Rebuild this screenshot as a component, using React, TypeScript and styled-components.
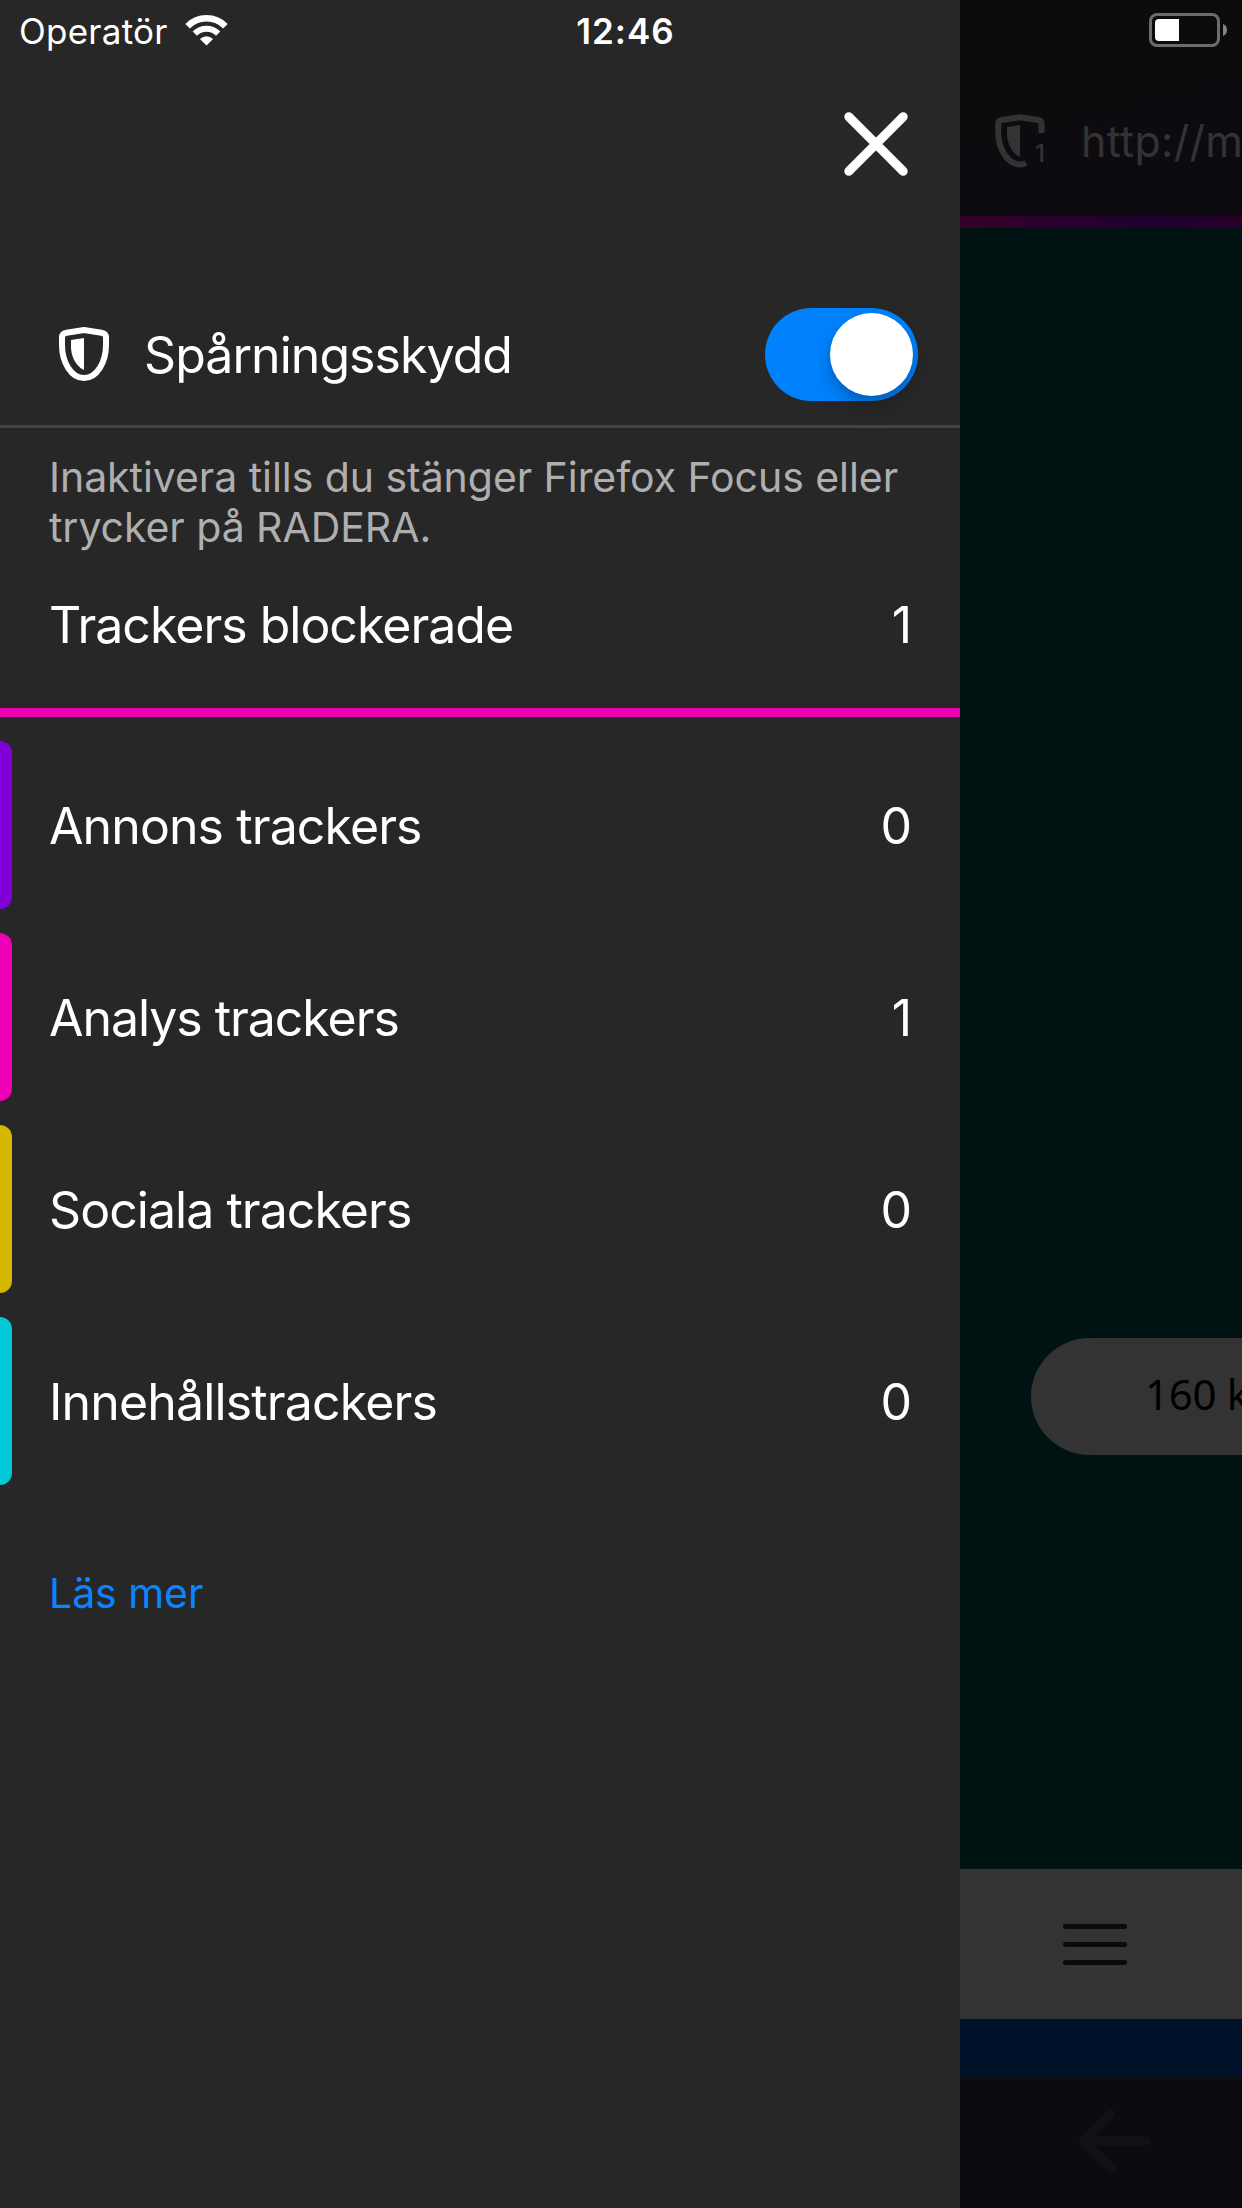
import React from "react";
import styled, { createGlobalStyle } from "styled-components";

const GlobalStyle = createGlobalStyle`
  *, *::before, *::after { box-sizing: border-box; }
  body {
    margin: 0;
    background: #272727;
    font-family: Inter, "Liberation Sans", sans-serif;
    -webkit-font-smoothing: antialiased;
  }
`;

const Screen = styled.div`
  position: relative;
  display: flex;
  width: 1242px;
  height: 2208px;
  overflow: hidden;
  white-space: nowrap;
`;

const StatusBar = styled.header`
  position: absolute;
  inset: 0 0 auto 0;
  display: grid;
  grid-template-columns: 1fr auto 1fr;
  align-items: center;
  height: 60px;
  padding: 0 15px 0 19px;
  color: #fff;
`;

const Carrier = styled.div`
  display: flex;
  align-items: center;
  gap: 17px;
  font-size: 35px;
  letter-spacing: 0.25px;
`;

const CarrierName = styled.span`
  padding-top: 2px;
`;

const Clock = styled.time`
  padding: 2px 0 0 5px;
  font-size: 35px;
  font-weight: 600;
  letter-spacing: 1px;
`;

const BatteryIcon = styled.svg`
  justify-self: end;
`;

const Drawer = styled.aside`
  display: flex;
  flex-direction: column;
  flex: 0 0 960px;
  background: #272727;
  color: #fff;
`;

const DrawerTop = styled.div`
  display: flex;
  justify-content: flex-end;
  height: 283px;
  padding: 112px 52px 0 0;
`;

const CloseButton = styled.button`
  display: block;
  width: 64px;
  height: 64px;
  padding: 0;
  border: 0;
  background: none;
`;

const ProtectionRow = styled.div`
  display: flex;
  align-items: center;
  height: 145px;
  padding: 0 42px 0 59px;
  border-bottom: 3px solid #434347;
`;

const ProtectionLabel = styled.span`
  flex: 1;
  margin-left: 35px;
  padding-top: 2px;
  font-size: 50px;
  letter-spacing: -0.95px;
`;

const Switch = styled.span`
  display: flex;
  justify-content: flex-end;
  align-items: center;
  width: 153px;
  height: 93px;
  padding-right: 5px;
  border-radius: 47px;
  background: #0082ff;
`;

const Knob = styled.span`
  width: 83px;
  height: 83px;
  border-radius: 50%;
  background: #fff;
  box-shadow: 0 9px 24px rgba(0, 0, 0, 0.2), 0 5px 6px rgba(0, 0, 0, 0.12);
`;

const Description = styled.p`
  margin: 0;
  padding: 24px 48px 0 49px;
  height: 128px;
  color: #afafb0;
  font-size: 41px;
  line-height: 50px;
  letter-spacing: -0.05px;
`;

const Row = styled.div`
  display: flex;
  align-items: center;
  justify-content: space-between;
  padding-right: 50px;
  font-size: 50px;
`;

const TotalRow = styled(Row)`
  height: 152px;
  padding: 0 50px 14px 49px;
`;

const Divider = styled.div`
  height: 9px;
  margin-bottom: 12px;
  background: #ed00b5;
`;

const TrackerRow = styled(Row)`
  height: 192px;
`;

const Marker = styled.span<{ $color: string }>`
  width: 12px;
  height: 168px;
  margin-right: 37px;
  border-radius: 0 12px 12px 0;
  background: ${(p) => p.$color};
`;

const Label = styled.span<{ $spacing: number }>`
  letter-spacing: ${(p) => p.$spacing}px;
`;

const TrackerLabel = styled(Label)`
  flex: 1;
  padding-top: 2px;
`;

const Count = styled.span`
  letter-spacing: -2px;
`;

const TrackerCount = styled(Count)`
  padding-top: 2px;
`;

const LearnMore = styled.a`
  padding: 71px 0 0 49px;
  color: #0a84ff;
  font-size: 41px;
  line-height: 50px;
  letter-spacing: -0.05px;
`;

const Browser = styled.main`
  display: flex;
  flex-direction: column;
  flex: 1;
  min-width: 0;
  overflow: hidden;
  background: #001312;
`;

const UrlBar = styled.div`
  display: flex;
  align-items: center;
  height: 216px;
  padding: 65px 0 0 35px;
  background: linear-gradient(165deg, #0d0b0c 40%, #0d0b10 60%);
  color: #333;
`;

const Url = styled.span`
  margin-left: 36px;
  font-size: 43px;
  letter-spacing: 0.3px;
`;

const Progress = styled.div`
  height: 12px;
  background: linear-gradient(90deg, #350029, #1f0031 68%, #280029);
`;

const Page = styled.div`
  display: flex;
  height: 1641px;
  padding: 1110px 0 0 71px;
`;

const Pill = styled.div`
  flex: 0 0 500px;
  height: 117px;
  padding-left: 114px;
  border-radius: 59px;
  background: #333;
  color: #000;
  font-family: "Noto Sans", "Open Sans", sans-serif;
  font-size: 42px;
  line-height: 111px;
  letter-spacing: -0.3px;
`;

const SiteMenu = styled.div`
  height: 150px;
  padding: 55px 0 0 103px;
  background: #333;
`;

const BurgerLine = styled.div`
  width: 64px;
  height: 5px;
  margin-bottom: 13px;
  border-radius: 3px;
  background: #0a0a0a;
`;

const SiteFooter = styled.div`
  height: 57px;
  background: #001229;
`;

const Toolbar = styled.div`
  flex: 1;
  padding: 30px 0 0 119px;
  border-top: 3px solid #0c1117;
  background: #0c0b0f;
`;

const trackers = [
  { name: "Annons trackers", count: 0, color: "#8000d7", spacing: -0.9 },
  { name: "Analys trackers", count: 1, color: "#ed00b5", spacing: -1.05 },
  { name: "Sociala trackers", count: 0, color: "#d7b600", spacing: -0.95 },
  { name: "Innehållstrackers", count: 0, color: "#00c8d7", spacing: -0.85 },
];

function Wifi() {
  return (
    <svg width="43" height="31" viewBox="0 0 43 31" fill="none" stroke="#fff">
      <path d="M2.6 11.2A26.5 26.5 0 0 1 40.4 11.2" strokeWidth="6.4" />
      <path d="M9.8 18.6A16.5 16.5 0 0 1 33.2 18.6" strokeWidth="6" />
      <path d="M21.5 30.5L14.9 24Q21.5 18.5 28.1 24Z" fill="#fff" stroke="none" />
    </svg>
  );
}

function Battery() {
  return (
    <BatteryIcon width="78" height="34" viewBox="0 0 78 34">
      <rect x="1.5" y="1.5" width="68" height="31" rx="6.5" fill="none" stroke="#6d6c6d" strokeWidth="3" />
      <path d="M10 6H30V28H10Q6 28 6 24V10Q6 6 10 6Z" fill="#fff" />
      <path d="M74 11Q78 12.500 78 17T74 23Z" fill="#858485" />
    </BatteryIcon>
  );
}

function Shield() {
  return (
    <svg width="50" height="54" viewBox="0 0 50 54">
      <path
        d="M25 3L42.500 5.800Q47 6.600 47 10.500V18C47 35 38 51 25 51S3 35 3 18V10.500Q3 6.600 7.500 5.800Z"
        fill="none"
        stroke="#fff"
        strokeWidth="6"
        strokeLinejoin="round"
      />
      <path d="M25 11V43C16 39 12 28 12 20V13Z" fill="#fff" />
    </svg>
  );
}

const CounterShield = styled.div`
  position: relative;
  width: 50px;
  height: 54px;
`;

const ShieldCount = styled.span`
  position: absolute;
  right: 0;
  bottom: 6px;
  font-size: 24px;
  font-weight: 500;
  line-height: 17px;
`;

export default function App() {
  return (
    <>
      <GlobalStyle />
      <Screen>
        <Drawer>
          <DrawerTop>
            <CloseButton aria-label="Stäng">
              <svg width="64" height="64" viewBox="0 0 64 64" stroke="#fff" strokeWidth="9" strokeLinecap="round">
                <path d="M4.800 4.800L59.200 59.200M59.200 4.800L4.800 59.200" />
              </svg>
            </CloseButton>
          </DrawerTop>
          <ProtectionRow>
            <Shield />
            <ProtectionLabel>Spårningsskydd</ProtectionLabel>
            <Switch>
              <Knob />
            </Switch>
          </ProtectionRow>
          <Description>
            Inaktivera tills du stänger Firefox Focus eller
            <br />
            trycker på RADERA.
          </Description>
          <TotalRow>
            <Label $spacing={-1}>Trackers blockerade</Label>
            <Count>1</Count>
          </TotalRow>
          <Divider />
          {trackers.map((t) => (
            <TrackerRow key={t.name}>
              <Marker $color={t.color} />
              <TrackerLabel $spacing={t.spacing}>{t.name}</TrackerLabel>
              <TrackerCount>{t.count}</TrackerCount>
            </TrackerRow>
          ))}
          <LearnMore>Läs mer</LearnMore>
        </Drawer>
        <Browser>
          <UrlBar>
            <CounterShield>
              <svg width="50" height="54" viewBox="0 0 50 54">
                <path
                  d="M46.500 19V9.500Q46.500 6.600 43 6L25 3.200L7 6Q3.200 6.600 3.200 10V18C3.200 34 12 50 25 50.500Q28.500 50.500 31 49"
                  fill="none"
                  stroke="#333"
                  strokeWidth="6"
                  strokeLinejoin="round"
                />
                <path d="M25 11V43C16 39 12 28 12 20V13Z" fill="#333" />
              </svg>
              <ShieldCount>1</ShieldCount>
            </CounterShield>
            <Url>http://m</Url>
          </UrlBar>
          <Progress />
          <Page>
            <Pill>160 k</Pill>
          </Page>
          <SiteMenu>
            <BurgerLine />
            <BurgerLine />
            <BurgerLine />
          </SiteMenu>
          <SiteFooter />
          <Toolbar>
            <svg width="72" height="64" viewBox="0 0 72 64" fill="none" stroke="#121116" strokeWidth="9" strokeLinecap="round" strokeLinejoin="round">
              <path d="M31.500 5L4.500 32L31.500 59M4.500 32H67.500" />
            </svg>
          </Toolbar>
        </Browser>
        <StatusBar>
          <Carrier>
            <CarrierName>Operatör</CarrierName>
            <Wifi />
          </Carrier>
          <Clock>12:46</Clock>
          <Battery />
        </StatusBar>
      </Screen>
    </>
  );
}
